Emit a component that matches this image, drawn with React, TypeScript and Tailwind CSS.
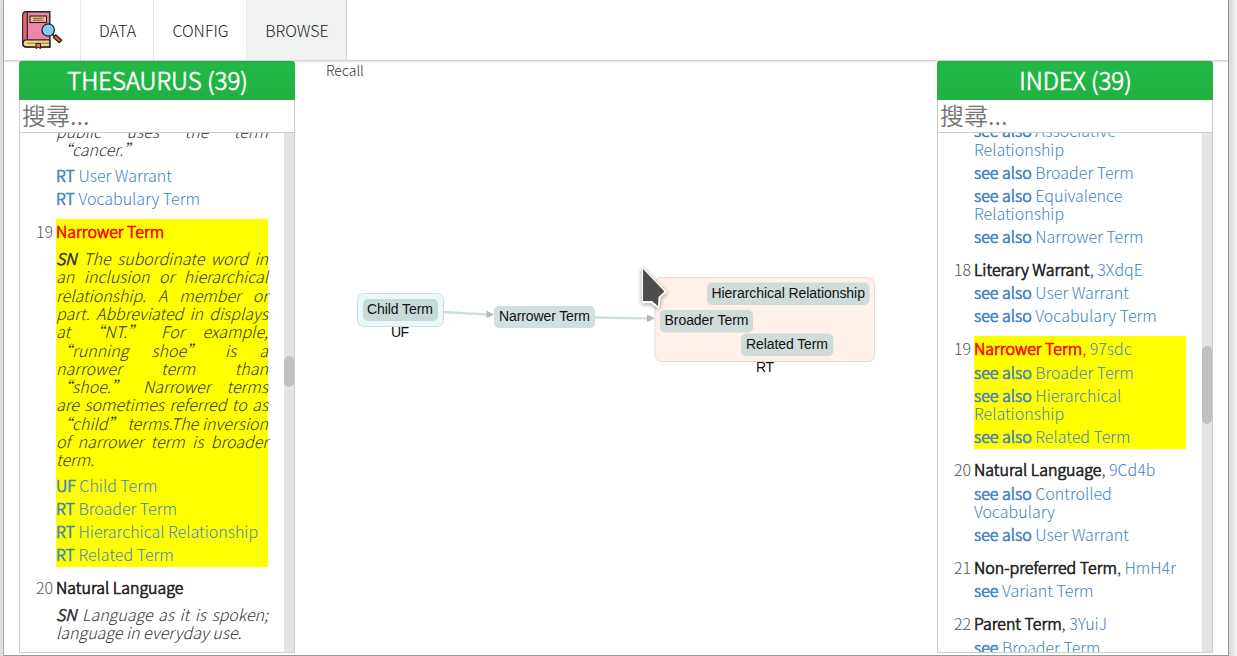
import React from "react";

type Link = { kind: string; lines: string[] };
type Entry = { n?: number; name?: string; code?: string; note?: string[]; links: Link[]; active?: boolean };

const thesaurus: Entry[] = [
  {
    note: ["public uses the term", "“cancer.”"],
    links: [
      { kind: "RT", lines: ["User Warrant"] },
      { kind: "RT", lines: ["Vocabulary Term"] },
    ],
  },
  {
    n: 19,
    name: "Narrower Term",
    active: true,
    note: [
      "SN The subordinate word in",
      "an inclusion or hierarchical",
      "relationship. A member or",
      "part. Abbreviated in displays",
      "at “NT.” For example,",
      "“running shoe” is a",
      "narrower term than",
      "“shoe.” Narrower terms",
      "are sometimes referred to as",
      "“child” terms.The inversion",
      "of narrower term is broader",
      "term.",
    ],
    links: [
      { kind: "UF", lines: ["Child Term"] },
      { kind: "RT", lines: ["Broader Term"] },
      { kind: "RT", lines: ["Hierarchical Relationship"] },
      { kind: "RT", lines: ["Related Term"] },
    ],
  },
  {
    n: 20,
    name: "Natural Language",
    note: ["SN Language as it is spoken;", "language in everyday use."],
    links: [],
  },
];

const index: Entry[] = [
  {
    links: [
      { kind: "see also", lines: ["Associative", "Relationship"] },
      { kind: "see also", lines: ["Broader Term"] },
      { kind: "see also", lines: ["Equivalence", "Relationship"] },
      { kind: "see also", lines: ["Narrower Term"] },
    ],
  },
  {
    n: 18,
    name: "Literary Warrant",
    code: "3XdqE",
    links: [
      { kind: "see also", lines: ["User Warrant"] },
      { kind: "see also", lines: ["Vocabulary Term"] },
    ],
  },
  {
    n: 19,
    name: "Narrower Term",
    code: "97sdc",
    active: true,
    links: [
      { kind: "see also", lines: ["Broader Term"] },
      { kind: "see also", lines: ["Hierarchical", "Relationship"] },
      { kind: "see also", lines: ["Related Term"] },
    ],
  },
  {
    n: 20,
    name: "Natural Language",
    code: "9Cd4b",
    links: [
      { kind: "see also", lines: ["Controlled", "Vocabulary"] },
      { kind: "see also", lines: ["User Warrant"] },
    ],
  },
  { n: 21, name: "Non-preferred Term", code: "HmH4r", links: [{ kind: "see", lines: ["Variant Term"] }] },
  { n: 22, name: "Parent Term", code: "3YuiJ", links: [{ kind: "see", lines: ["Broader Term"] }] },
];

const strong = "[-webkit-text-stroke:0.7px_currentColor]";

function NoteLine({ text, last }: { text: string; last: boolean }) {
  const head = text.startsWith("SN ");
  return (
    <span className={last ? "block whitespace-nowrap" : "block whitespace-nowrap [text-align-last:justify]"}>
      {head && <b className={`font-light ${strong}`}>SN</b>}
      {head ? text.slice(2) : text}
    </span>
  );
}

function EntryRow({ e }: { e: Entry }) {
  return (
    <li className="mb-2 flex">
      <span className="w-9 shrink-0 pr-[3px] text-right text-[#555] leading-[25px]">{e.n}</span>
      <div className={e.active ? "w-[212px] bg-[#ff0]" : "w-[212px]"}>
        {e.name && (
          <p className={e.active ? "h-[25.5px] whitespace-nowrap leading-[25px] text-[#f00]" : "h-[25.5px] whitespace-nowrap leading-[25px] text-[#222]"}>
            <b className={`font-light ${strong}`}>{e.name}</b>
            {e.code && (
              <>
                , <a className="text-[#4183c4]">{e.code}</a>
              </>
            )}
          </p>
        )}
        {e.note && (
          <p className={e.name ? "mb-[6px] mt-[5px] italic text-[#333] leading-[18.3px]" : "mb-[6px] italic text-[#333] leading-[18.3px]"}>
            {e.note.map((t, i) => (
              <NoteLine key={t} text={t} last={i === e.note!.length - 1} />
            ))}
          </p>
        )}
        {e.links.map((l) => (
          <p key={l.lines[0]} className="whitespace-nowrap pb-[3.4px] pt-[1.3px] text-[#4183c4] leading-[18.3px]">
            <b className={`font-light ${strong}`}>{l.kind}</b>{" "}
            {l.lines.map((t, i) => (
              <React.Fragment key={t}>
                {i > 0 && <br />}
                {t}
              </React.Fragment>
            ))}
          </p>
        ))}
      </div>
    </li>
  );
}

function Panel({ title, children, bar, shift }: { title: string; children: React.ReactNode; bar: string; shift: string }) {
  return (
    <section className="flex h-[592px] w-[276px] shrink-0 flex-col">
      <h2 className={`h-[39px] shrink-0 rounded-t-[3px] bg-gradient-to-b from-[#21ba45] to-[#21b042] pl-[1px] text-center text-[24px] font-light leading-[38px] text-white ${strong}`}>
        {title}
      </h2>
      <div className="h-[33px] shrink-0 border border-t-0 border-[#ccc] pl-[2px] text-[24px] font-[350] leading-[29px] text-[#757575]">
        搜尋...
      </div>
      <div className="flex min-h-0 flex-1 border border-t-0 border-[#ccc]">
        <div className="min-w-0 flex-1 overflow-hidden">
          <ul className={`text-[16px] ${shift}`}>{children}</ul>
        </div>
        <div className="w-[10px] shrink-0 bg-[#e4e4e4]">
          <div className={`rounded-[5px] bg-[#c0c0c0] ${bar}`} />
        </div>
      </div>
    </section>
  );
}

function Logo() {
  return (
    <svg className="h-[40px] w-[42px]" viewBox="0 0 42 40">
      <path d="M4.5 1.7H27.8V37H4C2 37 .8 35.8.8 33.8V5C.8 3 2 1.7 4.5 1.7Z" fill="#e888ab" stroke="#252020" strokeWidth="1.4" />
      <path d="M1.5 33V5C1.5 3 2.5 2.4 4.7 2.4V30C3 30 1.7 31 1.5 33Z" fill="#f0605f" />
      <path d="M5.3 2V30" stroke="#252020" strokeWidth="1.2" />
      <path d="M27.8 29.8H4.5C-.2 29.8-.2 36.8 4.5 36.8H27.8Z" fill="#f8d58b" stroke="#252020" strokeWidth="1.3" />
      <path d="M5 33.2H27" stroke="#7d6540" strokeWidth=".9" />
      <rect x="8" y="6" width="16.5" height="6.5" fill="#f7bd91" stroke="#252020" strokeWidth="1.1" />
      <path d="M11 8.3H21.5M11 10.3H21.5" stroke="#6b4038" strokeWidth=".8" />
      <path d="M14 33.5H18.5V38.7L16.3 37L14 38.7Z" fill="#ed7143" stroke="#252020" strokeWidth="1" />
      <path d="M30 24L33 27" stroke="#252020" strokeWidth="1.6" />
      <path d="M31.3 27.2L33.7 24.8L39.7 30.3L37.2 32.7Z" fill="#f0562b" stroke="#252020" strokeWidth="1.2" strokeLinejoin="round" />
      <circle cx="26.2" cy="20" r="6.2" fill="#83cdf5" stroke="#252020" strokeWidth="1.3" />
    </svg>
  );
}

function Graph() {
  return (
    <svg className="h-[656px] w-[610px]" viewBox="320 0 610 656" fontFamily="'Liberation Sans', Arial, sans-serif" fontSize="14" fill="#111" textAnchor="middle">
      <path d="M443 312L487 314.5M594 317.5L648 318.3" stroke="#cfdfdf" strokeWidth="2.3" />
      <path d="M486.5 310.5L494 314.7L486.5 318Z M647 314.5L655 318.3L647 322Z" fill="#b5b8b8" />
      <rect x="357.5" y="293.5" width="86" height="33" rx="6" fill="#e9f8fa" stroke="#d3dada" />
      <rect x="363" y="299" width="75" height="22" rx="5" fill="#c8dad8" />
      <text x="400" y="314" textLength="66">Child Term</text>
      <text x="400" y="337.4" textLength="18">UF</text>
      <rect x="494" y="306" width="101" height="22" rx="5" fill="#d0dfdf" />
      <text x="544.5" y="321" textLength="91">Narrower Term</text>
      <rect x="655" y="277.5" width="219.5" height="84" rx="6" fill="#fff1e9" stroke="#e0dcda" />
      <rect x="707" y="282.5" width="162.5" height="22.5" rx="5" fill="#d0dcd9" />
      <text x="788.2" y="298" textLength="153.5">Hierarchical Relationship</text>
      <rect x="660" y="310" width="93" height="22.5" rx="5" fill="#d0dcd9" />
      <text x="706.5" y="325.4" textLength="84">Broader Term</text>
      <rect x="741" y="333.5" width="92.5" height="22.5" rx="5" fill="#d0dcd9" />
      <text x="787" y="349" textLength="82">Related Term</text>
      <text x="765" y="372" textLength="18">RT</text>
      <path d="M642.5 268V302.5H651L658.5 308L660 297L666 292Z" fill="#fff" stroke="#fff" strokeWidth="1.5" className="drop-shadow-[0_1px_2px_#0006]" />
      <path d="M643 269L664.5 291.5L658.5 297L658 306L652 301H643Z" fill="#4d4d4d" />
    </svg>
  );
}

export default function App() {
  return (
    <div className="flex h-[656px] w-[1237px] overflow-hidden bg-white font-['Noto_Sans_CJK_TC',sans-serif] font-light" lang="zh-TW">
      <div className="w-1 shrink-0 border-r border-[#aaa] bg-[#dedede]" />
      <div className="flex w-[1224px] shrink-0 flex-col border-b border-[#999]">
        <nav className="z-10 flex h-[61px] shrink-0 border-b border-[#d4d4d5] text-[16px] leading-[61px] text-[#222] shadow-[0_1px_2px_#22242626]">
          <div className="w-[77px] border-r border-[#e6e6e6] pl-[18px] pt-[10px]">
            <Logo />
          </div>
          <a className="w-[73px] border-r border-[#e6e6e6] pl-[1px] text-center">DATA</a>
          <a className="w-[93px] border-r border-[#e6e6e6] pl-[1px] text-center">CONFIG</a>
          <a className="w-[100px] border-r border-[#d8dada] bg-[#f0f2f1] pl-[1px] text-center">BROWSE</a>
        </nav>
        <main className="flex min-h-0 flex-1 justify-between pl-[15px] pr-[15px]">
          <Panel title="THESAURUS (39)" shift="-mt-[11px]" bar="mt-[223px] h-[31px]">
            {thesaurus.map((e, i) => (
              <EntryRow key={i} e={e} />
            ))}
          </Panel>
          <div className="relative flex-1 overflow-hidden">
            <span className="block pl-[31px] text-[14px] leading-[18px] text-[#333]">Recall</span>
            <div className="absolute -top-[61px] left-[25px]">
              <Graph />
            </div>
          </div>
          <Panel title="INDEX (39)" shift="-mt-[13px]" bar="mt-[213px] h-[78px]">
            {index.map((e, i) => (
              <EntryRow key={i} e={e} />
            ))}
          </Panel>
        </main>
      </div>
      <div className="flex-1 border-l border-[#999] bg-gradient-to-r from-[#d8d8d8] to-[#f4f4f4]" />
    </div>
  );
}
